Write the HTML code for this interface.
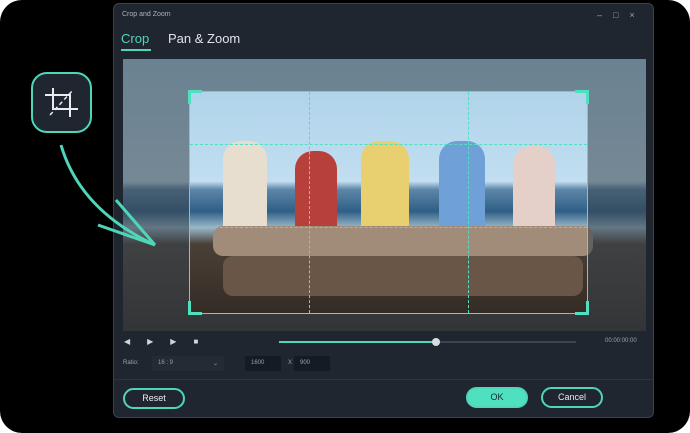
<!DOCTYPE html>
<html><head><style>
*{margin:0;padding:0;box-sizing:border-box}
body{width:690px;height:433px;background:#fff;font-family:"Liberation Sans",sans-serif;overflow:hidden;position:relative}
.bg{position:absolute;left:0;top:0;width:690px;height:433px;background:#000;border-radius:22px}
.dlg{position:absolute;left:113px;top:3px;width:541px;height:415px;background:#1f2630;border:1px solid #3a424c;border-radius:6px;overflow:hidden}
.abs{position:absolute}
.btn{position:absolute;height:21px;border:2px solid #4fd6b8;border-radius:11px;color:#e8ecef;font-size:9px;text-align:center;line-height:17px}
.p{position:absolute;border-radius:18px 18px 6px 6px}
</style></head><body>
<div class="bg"></div>
<div class="dlg">
 <div class="abs" style="left:8px;top:7px;font-size:7px;color:#aab2ba">Crop and Zoom</div>
 <div class="abs" style="left:483px;top:6px;color:#9aa3ab;font-size:9px;letter-spacing:11px">–□×</div>
 <div class="abs" style="left:7px;top:27px;font-size:13px;color:#4fd6b8">Crop</div>
 <div class="abs" style="left:7px;top:45px;width:30px;height:2px;background:#4fd6b8"></div>
 <div class="abs" style="left:54px;top:27px;font-size:13px;color:#e0e4e8">Pan &amp; Zoom</div>
 <div class="abs" style="left:9px;top:55px;width:523px;height:272px;overflow:hidden;background:linear-gradient(#a9d0e8 0%,#c2def0 45%,#5d86a8 48%,#2f5f86 56%,#9ab8c8 62%,#4a4038 68%,#2e2620 100%)">
  <div class="abs" style="left:80px;top:72px;width:400px;height:170px">
   <div class="p" style="left:20px;top:10px;width:44px;height:110px;background:#e8ded0"></div>
   <div class="p" style="left:92px;top:20px;width:42px;height:100px;background:#b8403a"></div>
   <div class="p" style="left:158px;top:10px;width:48px;height:105px;background:#e8d070"></div>
   <div class="p" style="left:236px;top:10px;width:46px;height:105px;background:#6fa0d8"></div>
   <div class="p" style="left:310px;top:15px;width:42px;height:105px;background:#e4d0c8"></div>
   <div class="abs" style="left:10px;top:95px;width:380px;height:30px;background:#a08c78;border-radius:10px"></div>
   <div class="abs" style="left:20px;top:125px;width:360px;height:40px;background:#6a5646;border-radius:10px"></div>
  </div>
  <div class="abs" style="left:66px;top:32px;width:399px;height:223px;border:1px solid #4fe0c0;box-shadow:0 0 0 400px rgba(55,65,75,.55)">
   <div class="abs" style="left:119px;top:0;height:221px;border-left:1px dashed #4fe0c0"></div>
   <div class="abs" style="left:278px;top:0;height:221px;border-left:1px dashed #4fe0c0"></div>
   <div class="abs" style="top:52px;left:0;width:397px;border-top:1px dashed #4fe0c0"></div>
   <div class="abs" style="top:135px;left:0;width:397px;border-top:1px dashed #4fe0c0"></div>
   <div class="abs" style="left:-2px;top:-2px;width:14px;height:14px;border-left:3px solid #4fe0c0;border-top:3px solid #4fe0c0"></div>
   <div class="abs" style="right:-2px;top:-2px;width:14px;height:14px;border-right:3px solid #4fe0c0;border-top:3px solid #4fe0c0"></div>
   <div class="abs" style="left:-2px;bottom:-2px;width:14px;height:14px;border-left:3px solid #4fe0c0;border-bottom:3px solid #4fe0c0"></div>
   <div class="abs" style="right:-2px;bottom:-2px;width:14px;height:14px;border-right:3px solid #4fe0c0;border-bottom:3px solid #4fe0c0"></div>
  </div>
 </div>
 <div class="abs" style="left:10px;top:333px;color:#d0d5da;font-size:8px;letter-spacing:17px">◀▶▶■</div>
 <div class="abs" style="left:165px;top:337px;width:297px;height:2px;background:#3c444d"></div>
 <div class="abs" style="left:165px;top:337px;width:157px;height:2px;background:#4fd6b8"></div>
 <div class="abs" style="left:318px;top:334px;width:8px;height:8px;border-radius:50%;background:#d8dde0"></div>
 <div class="abs" style="left:491px;top:334px;font-size:6px;color:#9aa3ab">00:00:00:00</div>
 <div class="abs" style="left:9px;top:356px;font-size:6px;color:#9aa3ab">Ratio:</div>
 <div class="abs" style="left:38px;top:352px;width:72px;height:15px;background:#232b35;font-size:6px;color:#9aa3ab;padding:4px 6px">16 : 9<span style="float:right">⌄</span></div>
 <div class="abs" style="left:131px;top:352px;width:36px;height:15px;background:#151b22;font-size:6px;color:#9aa3ab;padding:4px 6px">1600</div>
 <div class="abs" style="left:174px;top:356px;font-size:6px;color:#9aa3ab">X</div>
 <div class="abs" style="left:180px;top:352px;width:36px;height:15px;background:#151b22;font-size:6px;color:#9aa3ab;padding:4px 6px">900</div>
 <div class="abs" style="left:0;top:375px;width:541px;height:1px;background:#2c343e"></div>
 <div class="btn" style="left:9px;top:384px;width:62px">Reset</div>
 <div class="btn" style="left:352px;top:383px;width:62px;background:#4fe0c0;color:#1f2630">OK</div>
 <div class="btn" style="left:427px;top:383px;width:62px">Cancel</div>
</div>
<div class="abs" style="left:31px;top:72px;width:61px;height:61px;border:2px solid #4fd6b8;border-radius:16px;background:#1f2630"></div>
<svg class="abs" style="left:0;top:0" width="690" height="433">
 <g stroke="#e8ecef" stroke-width="2" fill="none">
  <path d="M53 88 V109 H78 M45 95 H70 V117"/>
  <path d="M50 115 L73 90" stroke-dasharray="4 3" stroke-width="1.5"/>
 </g>
 <path d="M61 145 Q80 210 155 245" stroke="#4fd6b8" stroke-width="3" fill="none"/>
 <path d="M98 225 L155 245 M116 200 L155 245" stroke="#4fd6b8" stroke-width="3" fill="none"/>
</svg>
</body></html>
